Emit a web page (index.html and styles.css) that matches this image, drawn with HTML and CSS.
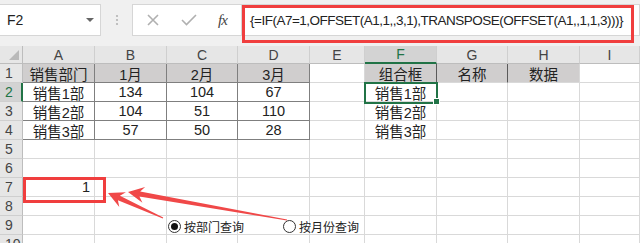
FILE: index.html
```html
<!DOCTYPE html>
<html>
<head>
<meta charset="utf-8">
<link rel="stylesheet" href="styles.css">
</head>
<body>
<div class="app">
  <div class="fbar">
    <div class="namebox"><span>F2</span><span class="caret"></span></div>
    <div class="grip"><svg width="4" height="12" viewBox="0 0 4 12"><circle cx="2" cy="2" r="1.1"/><circle cx="2" cy="6" r="1.1"/><circle cx="2" cy="10" r="1.1"/></svg></div>
    <div class="tools">
      <svg class="ic" width="14" height="12" viewBox="0 0 14 12"><path d="M2 1 L12 11 M12 1 L2 11"/></svg>
      <svg class="ic" width="16" height="12" viewBox="0 0 16 12"><path d="M1 6 L5.5 10.5 L15 1"/></svg>
      <span class="fx">fx</span>
    </div>
    <div class="formula">{=IF(A7=1,OFFSET(A1,1,,3,1),TRANSPOSE(OFFSET(A1,,1,1,3)))}</div>
  </div>
  <div class="sheet">
    <div class="ch corner"><span class="tri"></span></div>
    <div class="ch">A</div><div class="ch">B</div><div class="ch">C</div><div class="ch">D</div><div class="ch">E</div><div class="ch chsel">F</div><div class="ch">G</div><div class="ch">H</div><div class="ch">I</div>

    <div class="rh">1</div>
    <div class="c hd bd">销售部门</div><div class="c hd bd">1月</div><div class="c hd bd">2月</div><div class="c hd bd">3月</div><div class="c"></div><div class="c hd bdr">组合框</div><div class="c hd bdr">名称</div><div class="c hd">数据</div><div class="c"></div>

    <div class="rh rhsel">2</div>
    <div class="c bd">销售1部</div><div class="c bd">134</div><div class="c bd">104</div><div class="c bd">67</div><div class="c"></div><div class="c sel">销售1部</div><div class="c"></div><div class="c"></div><div class="c"></div>

    <div class="rh">3</div>
    <div class="c bd">销售2部</div><div class="c bd">104</div><div class="c bd">51</div><div class="c bd">110</div><div class="c"></div><div class="c">销售2部</div><div class="c"></div><div class="c"></div><div class="c"></div>

    <div class="rh">4</div>
    <div class="c bd">销售3部</div><div class="c bd">57</div><div class="c bd">50</div><div class="c bd">28</div><div class="c"></div><div class="c">销售3部</div><div class="c"></div><div class="c"></div><div class="c"></div>

    <div class="rh">5</div>
    <div class="c"></div><div class="c"></div><div class="c"></div><div class="c"></div><div class="c"></div><div class="c"></div><div class="c"></div><div class="c"></div><div class="c"></div>

    <div class="rh">6</div>
    <div class="c"></div><div class="c"></div><div class="c"></div><div class="c"></div><div class="c"></div><div class="c"></div><div class="c"></div><div class="c"></div><div class="c"></div>

    <div class="rh">7</div>
    <div class="c num">1</div><div class="c"></div><div class="c"></div><div class="c"></div><div class="c"></div><div class="c"></div><div class="c"></div><div class="c"></div><div class="c"></div>

    <div class="rh">8</div>
    <div class="c"></div><div class="c"></div><div class="c"></div><div class="c"></div><div class="c"></div><div class="c"></div><div class="c"></div><div class="c"></div><div class="c"></div>

    <div class="rh">9</div>
    <div class="c"></div><div class="c"></div><div class="c"></div><div class="c"></div><div class="c"></div><div class="c"></div><div class="c"></div><div class="c"></div><div class="c"></div>

    <div class="rh">10</div>
    <div class="c"></div><div class="c"></div><div class="c"></div><div class="c"></div><div class="c"></div><div class="c"></div><div class="c"></div><div class="c"></div><div class="c"></div>
  </div>

  <div class="mark mark-formula"></div>
  <div class="mark mark-a7"></div>
  <svg class="arrows" width="640" height="243" viewBox="0 0 640 243">
    <polygon points="108,193 125.9,192.3 119.9,195.7 163.2,217.5 162.8,218.5 117.9,200.3 119.3,206.9"/>
    <polygon points="128,192 145.1,186.9 140.2,191.6 287.1,219.5 286.9,220.5 139.4,196.6 142.4,202.7"/>
  </svg>
  <div class="radio r1"><span class="dot on"></span><span>按部门查询</span></div>
  <div class="radio r2"><span class="dot"></span><span>按月份查询</span></div>
</div>
</body>
</html>
```
FILE: styles.css
```css
html, body {
  margin: 0;
  background: #fff;
}
body {
  font-family: "Liberation Sans", "Noto Sans CJK SC", sans-serif;
  color: #222;
}
.app {
  position: relative;
  width: 640px;
  height: 243px;
  overflow: hidden;
}
.fbar {
  height: 46px;
  box-sizing: border-box;
  padding-top: 4px;
  background: #f0f0f0;
  display: flex;
  align-items: flex-start;
}
.namebox {
  width: 101px;
  height: 32px;
  box-sizing: border-box;
  background: #fff;
  border: 1px solid #d6d6d6;
  border-left: none;
  display: flex;
  align-items: center;
  justify-content: space-between;
  padding: 0 6px 0 7px;
  font-size: 14px;
  color: #222;
}
.caret {
  width: 0;
  height: 0;
  border-left: 4px solid transparent;
  border-right: 4px solid transparent;
  border-top: 4px solid #666;
}
.grip {
  width: 31px;
  height: 32px;
  display: flex;
  align-items: center;
  justify-content: center;
  fill: #b4b4b4;
}
.tools {
  width: 110px;
  height: 32px;
  box-sizing: border-box;
  background: #fff;
  border: 1px solid #d6d6d6;
  display: flex;
  align-items: center;
  padding-left: 13px;
}
.ic {
  fill: none;
  stroke: #b0b0b0;
  stroke-width: 1.6;
}
.ic + .ic {
  margin-left: 21px;
}
.fx {
  margin-left: 21px;
  font-family: "Liberation Serif", serif;
  font-style: italic;
  font-size: 15px;
  color: #444;
  letter-spacing: -1px;
}
.formula {
  flex: 1;
  height: 32px;
  box-sizing: border-box;
  background: #fff;
  border: 1px solid #d6d6d6;
  border-left: none;
  padding-left: 8px;
  font-size: 13.5px;
  letter-spacing: -0.5px;
  line-height: 32px;
  white-space: nowrap;
  overflow: hidden;
  color: #222;
}
.sheet {
  display: grid;
  grid-template-columns: 23px 72px 72px 71px 72px 55px 72px 71px 72px 1fr;
  grid-template-rows: 18px repeat(10, 19px);
}
.ch {
  background: #e6e6e6;
  border-right: 1px solid #cfcfcf;
  border-bottom: 1px solid #bdbdbd;
  display: flex;
  align-items: center;
  justify-content: center;
  font-size: 14px;
  color: #444;
}
.corner {
  position: relative;
  border-right-color: #bdbdbd;
}
.tri {
  position: absolute;
  right: 3px;
  bottom: 3px;
  width: 0;
  height: 0;
  border-left: 10px solid transparent;
  border-bottom: 10px solid #b9b9b9;
}
.chsel {
  background: #d3d3d3;
  color: #217346;
  border-bottom: 2px solid #217346;
}
.rh {
  background: #e6e6e6;
  border-right: 1px solid #bdbdbd;
  border-bottom: 1px solid #cfcfcf;
  display: flex;
  align-items: center;
  padding-left: 5px;
  font-size: 14px;
  color: #444;
}
.rhsel {
  background: #d3d3d3;
  color: #217346;
  border-right: 2px solid #217346;
}
.c {
  border-right: 1px solid #d9d9d9;
  border-bottom: 1px solid #d9d9d9;
  display: flex;
  align-items: center;
  justify-content: center;
  font-size: 14.5px;
  color: #222;
  white-space: nowrap;
}
.hd {
  background: #d0cece;
}
.bd {
  border-right-color: #7f7f7f;
  border-bottom-color: #7f7f7f;
}
.bdr {
  border-right-color: #5a5a5a;
}
.num {
  justify-content: flex-end;
  padding-right: 4px;
}
.sel {
  position: relative;
}
.sel::before {
  content: "";
  position: absolute;
  top: -1px;
  left: -1px;
  width: 74px;
  height: 22px;
  box-sizing: border-box;
  border: 2px solid #217346;
}
.sel::after {
  content: "";
  position: absolute;
  right: -4px;
  bottom: -4px;
  width: 5px;
  height: 5px;
  background: #217346;
  border: 1px solid #fff;
}
.mark {
  position: absolute;
  box-sizing: border-box;
  border: 3px solid #f03e3e;
}
.mark-formula {
  left: 242px;
  top: 5px;
  width: 392px;
  height: 38px;
}
.mark-a7 {
  left: 23px;
  top: 177px;
  width: 83px;
  height: 26px;
}
.arrows {
  position: absolute;
  left: 0;
  top: 0;
  fill: #f04848;
  pointer-events: none;
}
.radio {
  position: absolute;
  top: 219px;
  display: flex;
  align-items: center;
  gap: 3px;
  font-family: "Noto Sans CJK SC", sans-serif;
  font-size: 12px;
  color: #222;
  line-height: 15px;
}
.r1 {
  left: 168px;
}
.r2 {
  left: 283px;
}
.dot {
  width: 13px;
  height: 13px;
  box-sizing: border-box;
  border: 1px solid #333;
  border-radius: 50%;
  background: #fff;
  display: flex;
  align-items: center;
  justify-content: center;
}
.dot.on::after {
  content: "";
  width: 7px;
  height: 7px;
  border-radius: 50%;
  background: #111;
}
```
